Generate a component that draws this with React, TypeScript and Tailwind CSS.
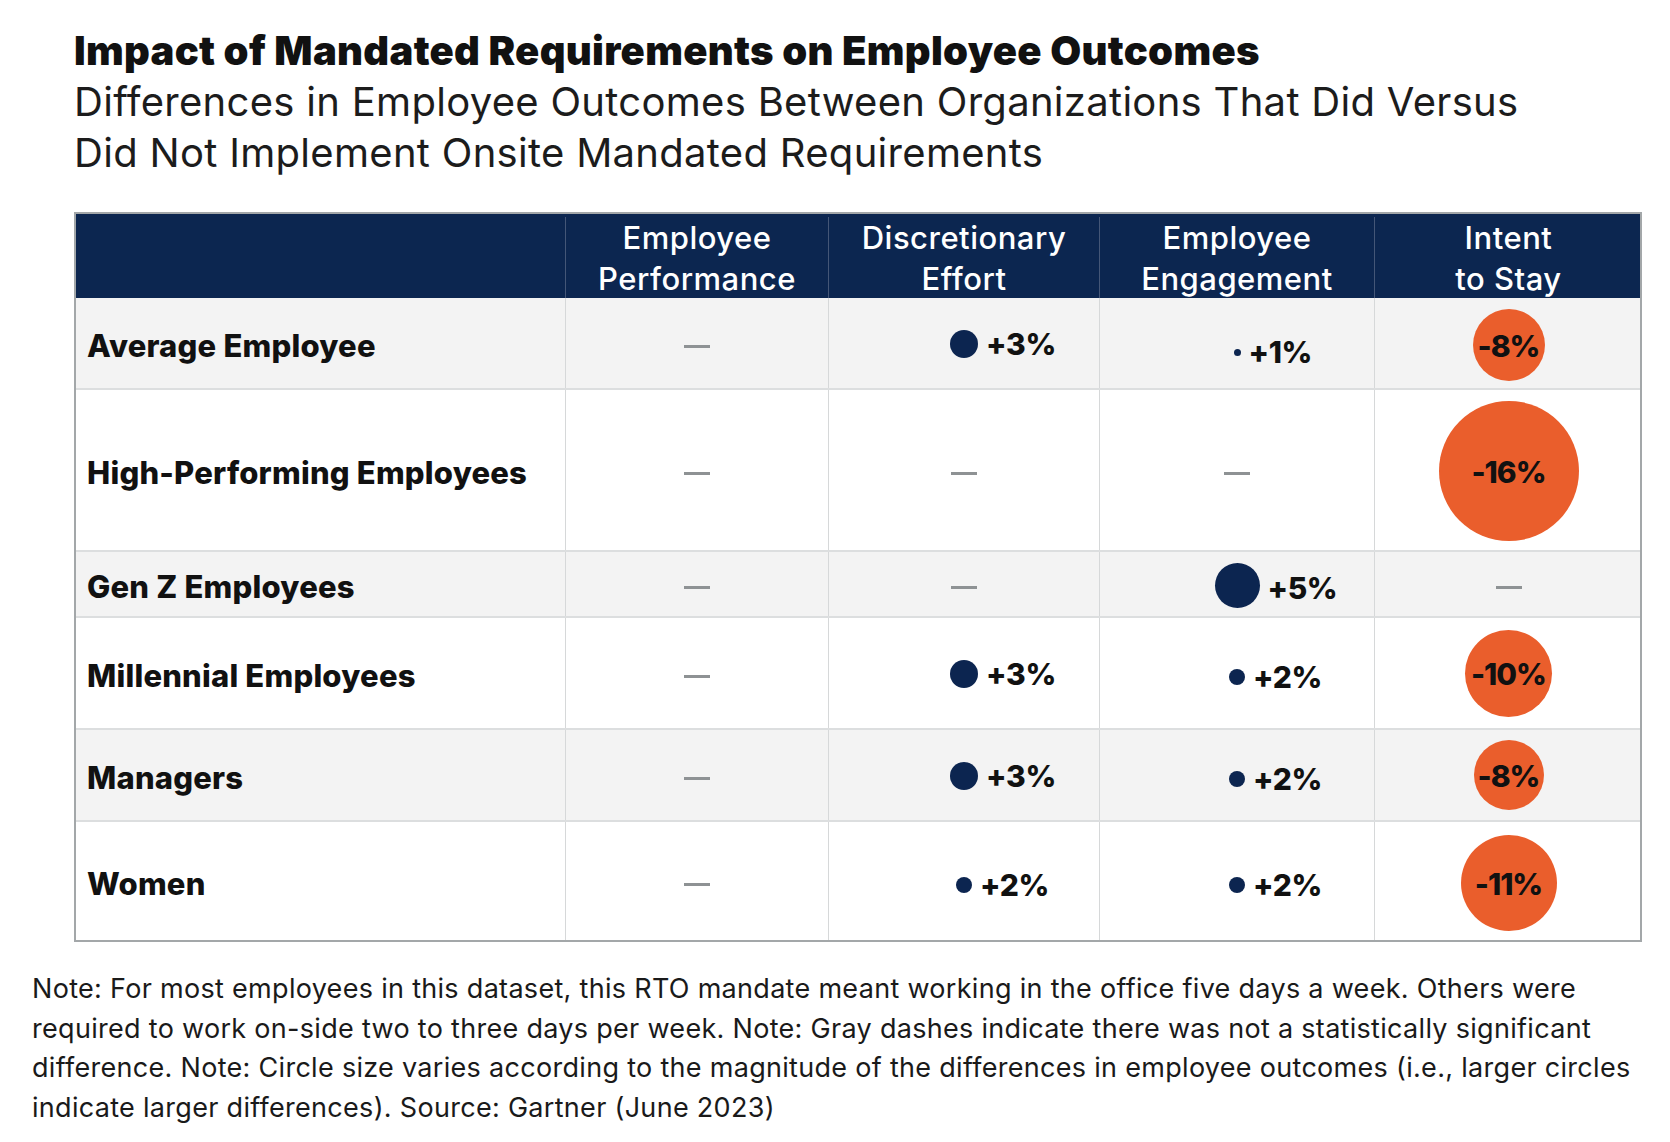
import React from "react";

type Cell = { value: string; dot: string; shift?: string; textShift?: string } | null;

type Row = {
  label: string;
  height: string;
  bg: string;
  perf: Cell;
  disc: Cell;
  eng: Cell;
  stay: Cell;
};

const rows: Row[] = [
  {
    label: "Average Employee",
    height: "h-[92px]",
    bg: "bg-[#f3f3f3]",
    perf: null,
    disc: { value: "+3%", dot: "size-[28px]", shift: "translate-y-[1px]", textShift: "translate-y-[1px]" },
    eng: { value: "+1%", dot: "size-[7px]", shift: "translate-y-[9px]", textShift: "translate-y-[9px]" },
    stay: { value: "-8%", dot: "size-[72px] translate-y-[2px]" },
  },
  {
    label: "High-Performing Employees",
    height: "h-[162px]",
    bg: "bg-white",
    perf: null,
    disc: null,
    eng: null,
    stay: { value: "-16%", dot: "size-[140px] translate-y-[1px]" },
  },
  {
    label: "Gen Z Employees",
    height: "h-[66px]",
    bg: "bg-[#f3f3f3]",
    perf: null,
    disc: null,
    eng: { value: "+5%", dot: "size-[45px]", shift: "translate-y-[1px]", textShift: "translate-y-[4px]" },
    stay: null,
  },
  {
    label: "Millennial Employees",
    height: "h-[112px]",
    bg: "bg-white",
    perf: null,
    disc: { value: "+3%", dot: "size-[28px]", shift: "translate-y-[1px]", textShift: "translate-y-[1px]" },
    eng: { value: "+2%", dot: "size-[16px]", shift: "translate-y-[4px]", textShift: "translate-y-[4px]" },
    stay: { value: "-10%", dot: "size-[87px]" },
  },
  {
    label: "Managers",
    height: "h-[92px]",
    bg: "bg-[#f3f3f3]",
    perf: null,
    disc: { value: "+3%", dot: "size-[28px]", shift: "translate-y-[1px]", textShift: "translate-y-[1px]" },
    eng: { value: "+2%", dot: "size-[16px]", shift: "translate-y-[4px]", textShift: "translate-y-[4px]" },
    stay: { value: "-8%", dot: "size-[70px]" },
  },
  {
    label: "Women",
    height: "h-[118px]",
    bg: "bg-white",
    perf: null,
    disc: { value: "+2%", dot: "size-[16px]", shift: "translate-y-[4px]", textShift: "translate-y-[4px]" },
    eng: { value: "+2%", dot: "size-[16px]", shift: "translate-y-[4px]", textShift: "translate-y-[4px]" },
    stay: { value: "-11%", dot: "size-[96px] translate-y-[2px]" },
  },
];

const cols = "grid grid-cols-[490px_263px_271px_275px_267px]";

function Dash() {
  return <div className="h-[3px] w-[26px] translate-y-[3px] bg-[#8e9294]" />;
}

function DotCell({ cell }: { cell: Cell }) {
  if (!cell) {
    return (
      <div className="flex items-center justify-center border-r border-[#d6d8d9]">
        <Dash />
      </div>
    );
  }
  return (
    <div className="grid grid-cols-[1fr_auto_1fr] items-center border-r border-[#d6d8d9]">
      <div />
      <div className={`rounded-full bg-[#0c2550] ${cell.dot} ${cell.shift ?? ""}`} />
      <div className={`pl-[8px] text-[30px] font-extrabold tracking-[-0.4px] text-[#111] ${cell.textShift ?? ""}`}>
        {cell.value}
      </div>
    </div>
  );
}

function StayCell({ cell }: { cell: Cell }) {
  if (!cell) {
    return (
      <div className="flex items-center justify-center">
        <Dash />
      </div>
    );
  }
  return (
    <div className="flex items-center justify-center">
      <div
        className={`flex items-center justify-center rounded-full bg-[#ea5e2c] text-[30px] font-extrabold tracking-[-1px] text-[#111] ${cell.dot}`}
      >
        <span className="translate-y-[1px]">{cell.value}</span>
      </div>
    </div>
  );
}

export default function App() {
  return (
    <div className="min-h-[1142px] w-[1670px] bg-white font-['Inter','Noto_Sans',sans-serif] text-[#111]">
      <div className="pl-[74px] pt-[28px]">
        <h1 className="text-[40px] font-black leading-[46px] tracking-[0.3px]">
          Impact of Mandated Requirements on Employee Outcomes
        </h1>
        <p className="mt-[2px] text-[40px] leading-[51px] tracking-[0.3px] text-[#1c1c1c]">
          Differences in Employee Outcomes Between Organizations That Did Versus
          <br />
          Did Not Implement Onsite Mandated Requirements
        </p>

        <div className="mt-[34px] w-[1568px] border-2 border-[#a3a7a9]">
          <div className={`${cols} h-[84px] bg-[#0c2650] pt-[3px] text-center text-[31px] font-medium leading-[41px] tracking-[0.5px] text-white`}>
            <div className="border-r border-[#445677]" />
            <div className="flex items-center justify-center border-r border-[#445677]">
              Employee
              <br />
              Performance
            </div>
            <div className="flex items-center justify-center border-r border-[#445677]">
              Discretionary
              <br />
              Effort
            </div>
            <div className="flex items-center justify-center border-r border-[#445677]">
              Employee
              <br />
              Engagement
            </div>
            <div className="flex items-center justify-center">
              Intent
              <br />
              to Stay
            </div>
          </div>

          {rows.map((row, i) => (
            <div
              key={row.label}
              className={`${cols} ${row.height} ${row.bg} ${i < rows.length - 1 ? "border-b-2 border-[#dcdedf]" : ""}`}
            >
              <div className="flex items-center border-r border-[#d6d8d9] pl-[11px] pt-[6px] text-[31px] font-extrabold tracking-[0.2px]">
                {row.label}
              </div>
              <DotCell cell={row.perf} />
              <DotCell cell={row.disc} />
              <DotCell cell={row.eng} />
              <StayCell cell={row.stay} />
            </div>
          ))}
        </div>
      </div>

      <p className="mt-[27px] pl-[32px] text-[27px] leading-[39.5px] tracking-[0.3px] text-[#1a1a1a]">
        Note: For most employees in this dataset, this RTO mandate meant working in the office five days a week. Others were
        <br />
        required to work on-side two to three days per week. Note: Gray dashes indicate there was not a statistically significant
        <br />
        difference. Note: Circle size varies according to the magnitude of the differences in employee outcomes (i.e., larger circles
        <br />
        indicate larger differences). Source: Gartner (June 2023)
      </p>
    </div>
  );
}
